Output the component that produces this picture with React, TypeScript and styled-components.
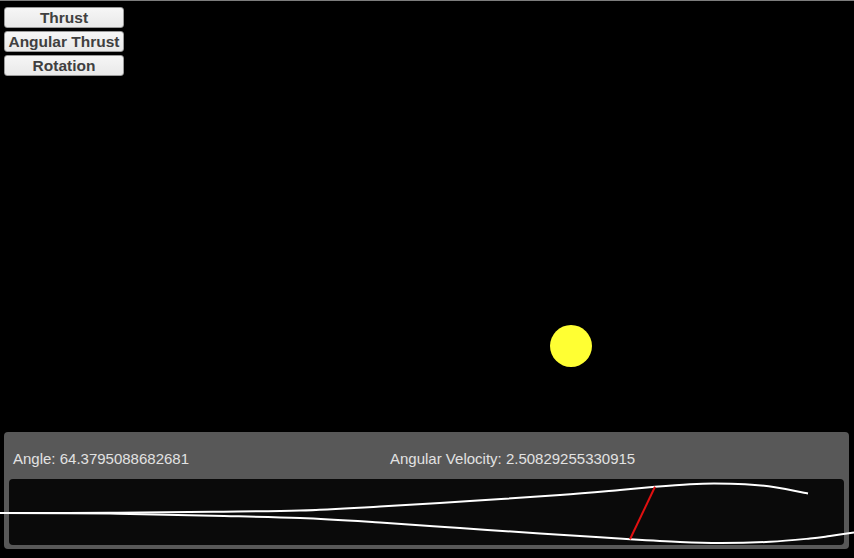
import React from 'react'
import styled, { createGlobalStyle } from 'styled-components'

const GlobalStyle = createGlobalStyle`
  html, body {
    margin: 0;
    padding: 0;
    background: #000;
  }
`

const Screen = styled.div`
  position: relative;
  width: 854px;
  height: 558px;
  box-sizing: border-box;
  border-top: 1px solid #7c7c7c;
  background: #000;
  display: flex;
  flex-direction: column;
  overflow: hidden;
  font-family: "Liberation Sans", Arial, sans-serif;
`

const Controls = styled.div`
  display: flex;
  flex-direction: column;
  gap: 3px;
  padding: 6px 0 0 4px;
  width: 120px;
`

const ControlButton = styled.button`
  height: 21px;
  padding: 0;
  border: 1px solid #9a9a9a;
  border-radius: 3px;
  background: linear-gradient(#f6f6f6, #e9e9e9);
  color: #404040;
  font-family: "Liberation Sans", Arial, sans-serif;
  font-weight: bold;
  font-size: 15.5px;
  line-height: 19px;
  text-align: center;
  white-space: nowrap;
`

const Scene = styled.div`
  position: relative;
  flex: 1;
`

const Ball = styled.div<{ $x: number; $y: number; $r: number }>`
  position: absolute;
  left: ${p => p.$x - p.$r}px;
  top: ${p => p.$y - p.$r}px;
  width: ${p => p.$r * 2}px;
  height: ${p => p.$r * 2}px;
  border-radius: 50%;
  background: #ffff33;
`

const Panel = styled.div`
  margin: 0 5px 9px 4px;
  height: 117px;
  box-sizing: border-box;
  background: #585858;
  border-radius: 4px;
  padding: 0 5px 4px 5px;
  display: flex;
  flex-direction: column;
`

const Readouts = styled.div`
  display: flex;
  align-items: flex-end;
  height: 35px;
  padding-left: 4px;
  color: #e2e2e2;
  font-size: 15px;
`

const Readout = styled.span<{ $width?: number }>`
  width: ${p => (p.$width ? `${p.$width}px` : 'auto')};
  flex-shrink: 0;
`

const Graph = styled.div`
  margin-top: 12px;
  flex: 1;
  background: #0a0a0a;
  border-radius: 4px;
`

const Trace = styled.svg`
  position: absolute;
  left: 0;
  top: 0;
  pointer-events: none;
`

const topCurve = [
  [0, 512], [110, 511.8], [213, 510.8], [300, 509.5], [380, 505.5], [470, 500],
  [560, 494], [620, 489], [655, 485.8], [690, 483.2], [714, 482.4],
  [745, 483.2], [775, 486.2], [808, 492.5],
]

const bottomCurve = [
  [0, 512], [110, 512.6], [213, 514.8], [300, 517], [380, 521.5], [460, 527],
  [540, 532.5], [600, 536.2], [630, 538.3], [680, 541], [721, 542],
  [770, 540.8], [810, 537.5], [830, 535], [854, 531.5],
]

// Catmull-Rom through the sampled points
const toPath = (pts: number[][]) => {
  let d = `M${pts[0][0]},${pts[0][1]}`
  for (let i = 0; i < pts.length - 1; i++) {
    const p0 = pts[i - 1] || pts[i]
    const p1 = pts[i]
    const p2 = pts[i + 1]
    const p3 = pts[i + 2] || p2
    const c1x = p1[0] + (p2[0] - p0[0]) / 6
    const c1y = p1[1] + (p2[1] - p0[1]) / 6
    const c2x = p2[0] - (p3[0] - p1[0]) / 6
    const c2y = p2[1] - (p3[1] - p1[1]) / 6
    d += ` C${c1x},${c1y} ${c2x},${c2y} ${p2[0]},${p2[1]}`
  }
  return d
}

const App = () => {
  return (
    <Screen>
      <GlobalStyle />
      <Controls>
        <ControlButton>Thrust</ControlButton>
        <ControlButton>Angular Thrust</ControlButton>
        <ControlButton>Rotation</ControlButton>
      </Controls>
      <Scene>
        <Ball $x={571} $y={348 - 78} $r={21} />
      </Scene>
      <Panel>
        <Readouts>
          <Readout $width={377}>Angle: 64.3795088682681</Readout>
          <Readout>Angular Velocity: 2.50829255330915</Readout>
        </Readouts>
        <Graph />
      </Panel>
      <Trace width={854} height={558} viewBox="0 0 854 558">
        <path d={toPath(topCurve)} fill="none" stroke="#fff" strokeWidth={2} />
        <path d={toPath(bottomCurve)} fill="none" stroke="#fff" strokeWidth={2} />
        <line x1={655} y1={485.8} x2={630} y2={538.3} stroke="#e01010" strokeWidth={2} />
      </Trace>
    </Screen>
  )
}

export default App
